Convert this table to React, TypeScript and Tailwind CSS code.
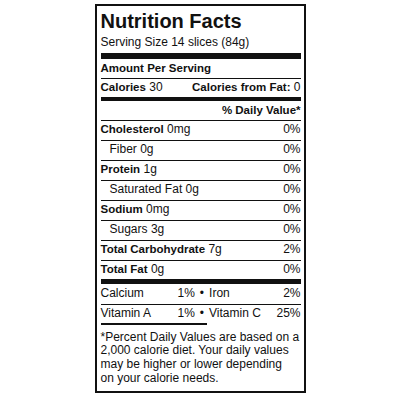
const rows = [
  { name: "Cholesterol", amount: "0mg", dv: "0%", sub: false },
  { name: "Fiber", amount: "0g", dv: "0%", sub: true },
  { name: "Protein", amount: "1g", dv: "0%", sub: false },
  { name: "Saturated Fat", amount: "0g", dv: "0%", sub: true },
  { name: "Sodium", amount: "0mg", dv: "0%", sub: false },
  { name: "Sugars", amount: "3g", dv: "0%", sub: true },
  { name: "Total Carbohydrate", amount: "7g", dv: "2%", sub: false },
];

function NutrientRow({ name, amount, dv, sub }: { name: string; amount: string; dv: string; sub: boolean }) {
  return (
    <div className="flex h-[20px] items-start justify-between border-b border-[#111] text-[12px] leading-[17px]">
      {sub ? (
        <span className="pl-[9px]">
          {name} {amount}
        </span>
      ) : (
        <span>
          <span className="text-[11.5px] font-bold">{name}</span> {amount}
        </span>
      )}
      <span>{dv}</span>
    </div>
  );
}

export default function App() {
  return (
    <div className="h-[400px] w-[400px] bg-white pt-[4px]">
      <div className="mx-auto h-[389px] w-[211px] border-2 border-[#111] pl-[4px] pr-[3px] font-['Liberation_Sans',Arial,sans-serif] text-[#111]">
        <h1 className="mt-[4px] text-[20px] font-bold leading-[23px]">Nutrition Facts</h1>
        <p className="mt-[3px] text-[12px] leading-[13px]">Serving Size 14 slices (84g)</p>
        <div className="mt-[4px] h-[6px] bg-[#111]" />

        <div className="h-[20px] border-b border-[#111] text-[11.5px] font-bold leading-[19px]">
          Amount Per Serving
        </div>
        <div className="flex h-[18px] items-start justify-between text-[12px] leading-[16px]">
          <span>
            <span className="text-[11.5px] font-bold">Calories</span> 30
          </span>
          <span>
            <span className="text-[11.5px] font-bold">Calories from Fat:</span> 0
          </span>
        </div>
        <div className="h-[4px] bg-[#111]" />

        <div className="h-[20px] border-b border-[#111] text-right text-[11.5px] font-bold leading-[19px]">
          % Daily Value*
        </div>

        {rows.map((r) => (
          <NutrientRow key={r.name} {...r} />
        ))}

        <div className="flex h-[18px] items-start justify-between text-[12px] leading-[17px]">
          <span>
            <span className="text-[11.5px] font-bold">Total Fat</span> 0g
          </span>
          <span>0%</span>
        </div>
        <div className="h-[5px] bg-[#111]" />

        <div className="flex h-[21px] items-start border-b border-[#111] text-[12px] leading-[18px]">
          <span className="w-[77px]">Calcium</span>
          <span>1%</span>
          <span className="mx-[5px]">•</span>
          <span>Iron</span>
          <span className="ml-auto">2%</span>
        </div>
        <div className="flex h-[18px] items-start text-[12px] leading-[16px]">
          <span className="w-[77px]">Vitamin A</span>
          <span>1%</span>
          <span className="mx-[5px]">•</span>
          <span>Vitamin C</span>
          <span className="ml-auto">25%</span>
        </div>
        <div className="h-[2px] w-[106px] bg-[#111]" />

        <p className="mt-[5.5px] whitespace-nowrap text-[12px] leading-[13.7px]">
          *Percent Daily Values are based on a
          <br />
          2,000 calorie diet. Your daily values
          <br />
          may be higher or lower depending
          <br />
          on your calorie needs.
        </p>
      </div>
    </div>
  );
}
